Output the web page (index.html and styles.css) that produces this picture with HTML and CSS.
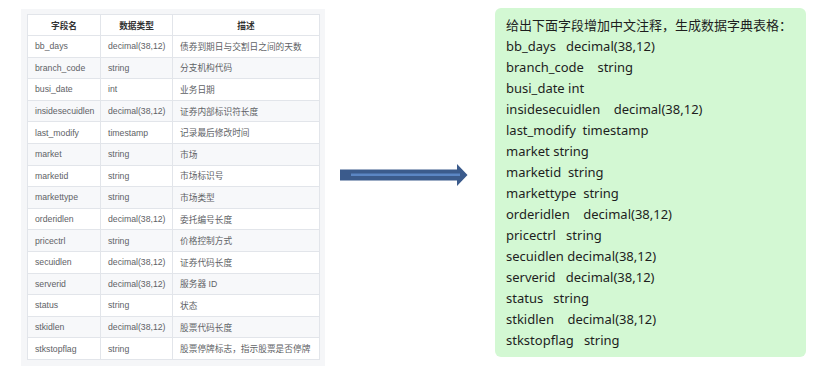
FILE: index.html
```html
<!DOCTYPE html>
<html lang="zh-CN">
<head>
<meta charset="utf-8">
<title>数据字典</title>
<link rel="stylesheet" href="styles.css">
</head>
<body>
<div class="page">
  <div class="panel">
    <table class="dict">
      <colgroup><col class="c1"><col class="c2"><col class="c3"></colgroup>
      <thead>
        <tr><th>字段名</th><th>数据类型</th><th>描述</th></tr>
      </thead>
      <tbody>
        <tr><td>bb_days</td><td>decimal(38,12)</td><td>债券到期日与交割日之间的天数</td></tr>
        <tr><td>branch_code</td><td>string</td><td>分支机构代码</td></tr>
        <tr><td>busi_date</td><td>int</td><td>业务日期</td></tr>
        <tr><td>insidesecuidlen</td><td>decimal(38,12)</td><td>证券内部标识符长度</td></tr>
        <tr><td>last_modify</td><td>timestamp</td><td>记录最后修改时间</td></tr>
        <tr><td>market</td><td>string</td><td>市场</td></tr>
        <tr><td>marketid</td><td>string</td><td>市场标识号</td></tr>
        <tr><td>markettype</td><td>string</td><td>市场类型</td></tr>
        <tr><td>orderidlen</td><td>decimal(38,12)</td><td>委托编号长度</td></tr>
        <tr><td>pricectrl</td><td>string</td><td>价格控制方式</td></tr>
        <tr><td>secuidlen</td><td>decimal(38,12)</td><td>证券代码长度</td></tr>
        <tr><td>serverid</td><td>decimal(38,12)</td><td>服务器 ID</td></tr>
        <tr><td>status</td><td>string</td><td>状态</td></tr>
        <tr><td>stkidlen</td><td>decimal(38,12)</td><td>股票代码长度</td></tr>
        <tr><td>stkstopflag</td><td>string</td><td>股票停牌标志，指示股票是否停牌</td></tr>
      </tbody>
    </table>
  </div>
  <div class="arrow">
    <svg width="128" height="22" viewBox="0 0 128 22">
      <polygon points="0,5.5 117,5.5 117,0 127.5,11 117,22 117,16.5 0,16.5" fill="#3b5b8c"/>
      <rect x="11" y="9.5" width="109" height="2.5" fill="#5b86c4"/>
    </svg>
  </div>
  <div class="prompt">
<div class="ln">给出下面字段增加中文注释，生成数据字典表格：</div>
<div class="ln">bb_days   decimal(38,12)</div>
<div class="ln">branch_code    string</div>
<div class="ln">busi_date int</div>
<div class="ln">insidesecuidlen    decimal(38,12)</div>
<div class="ln">last_modify  timestamp</div>
<div class="ln">market string</div>
<div class="ln">marketid  string</div>
<div class="ln">markettype  string</div>
<div class="ln">orderidlen    decimal(38,12)</div>
<div class="ln">pricectrl   string</div>
<div class="ln">secuidlen decimal(38,12)</div>
<div class="ln">serverid   decimal(38,12)</div>
<div class="ln">status   string</div>
<div class="ln">stkidlen    decimal(38,12)</div>
<div class="ln">stkstopflag   string</div>
  </div>
</div>
</body>
</html>
```
FILE: styles.css
```css
html, body {
  margin: 0;
  padding: 0;
  background: #ffffff;
}
.page {
  display: flex;
  align-items: flex-start;
  width: 823px;
  height: 366px;
  overflow: hidden;
}
.panel {
  margin-left: 21px;
  margin-top: 9px;
  width: 298px;
  height: 357px;
  padding: 5px 0 0 6px;
  background: #f5f6f8;
  flex: none;
}
.dict {
  border-collapse: collapse;
  table-layout: fixed;
  width: 292px;
  font-family: "Liberation Sans", "Noto Sans CJK SC", sans-serif;
  font-size: 8.7px;
  color: #606266;
  background: #ffffff;
}
.c1 { width: 73px; }
.c2 { width: 72px; }
.c3 { width: 147px; }
.dict th, .dict td {
  border: 1px solid #e2e5ea;
  padding: 0 0 0 7px;
  text-align: left;
  white-space: nowrap;
  overflow: hidden;
}
.dict th {
  height: 20px;
  text-align: center;
  padding: 0;
  font-weight: bold;
  color: #333333;
}
.dict td {
  height: 20.6px;
}
.dict tbody tr:nth-child(even) td {
  background: #f7f8fa;
}
.arrow {
  flex: none;
  margin-left: 15px;
  margin-top: 164px;
  width: 128px;
  height: 22px;
  display: flex;
}
.prompt {
  flex: none;
  margin-left: 27px;
  margin-top: 8px;
  width: 300px;
  height: 342px;
  padding: 7px 0 0 11px;
  background: #d3f8d3;
  border-radius: 6px;
  font-family: "Noto Sans", "Noto Sans CJK SC", sans-serif;
  font-size: 13px;
  line-height: 21px;
  color: #1e1e1e;
}
.ln {
  white-space: pre;
}
```
